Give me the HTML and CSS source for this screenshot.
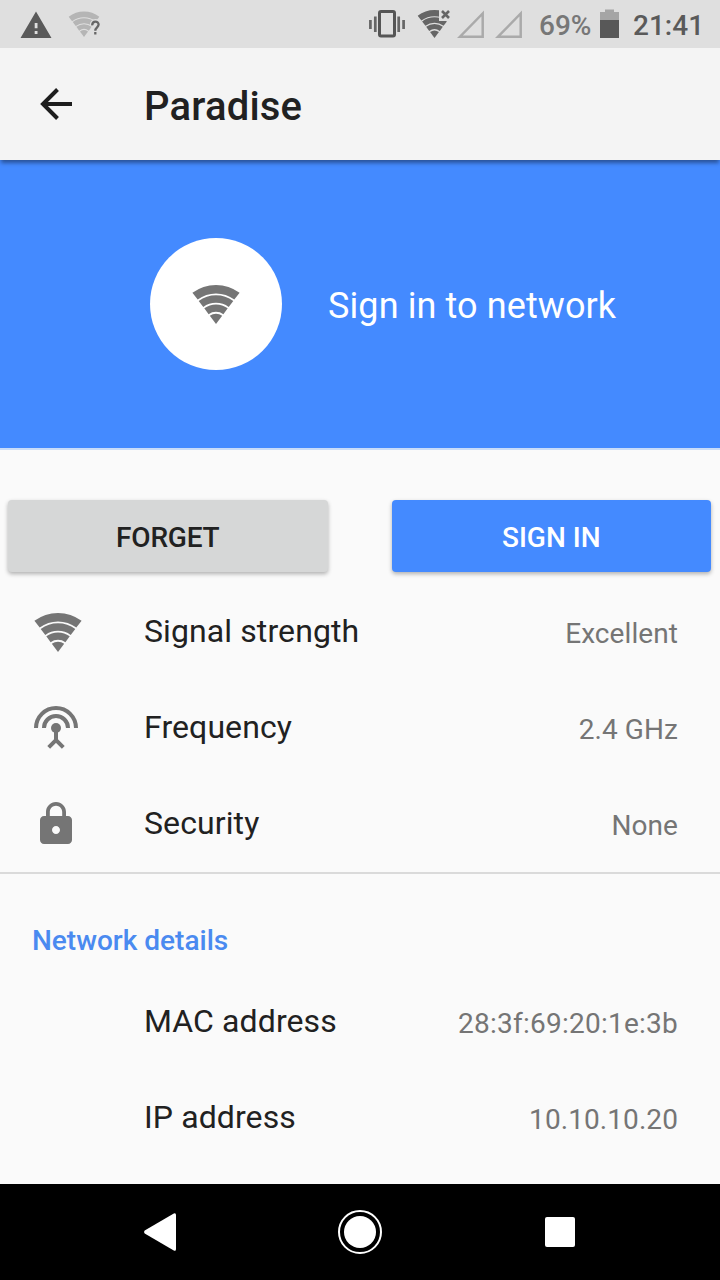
FILE: index.html
```html
<!DOCTYPE html>
<html lang="en">
<head>
<meta charset="utf-8">
<title>Paradise</title>
<link rel="stylesheet" href="styles.css">
</head>
<body>
<svg class="defs" aria-hidden="true">
  <symbol id="wifi" viewBox="-24 -40 48 40">
    <path d="M-23.6-31.2A39.2 39.2 0 0 1 23.6-31.2L18.3-24.4A30.6 30.6 0 0 0-18.3-24.4Z"/>
    <path d="M-17.3-23.1A28.9 28.9 0 0 1 17.3-23.1L12.7-17A21.3 21.3 0 0 0-12.7-17Z"/>
    <path d="M-11.7-15.7A19.6 19.6 0 0 1 11.7-15.7L7.4-9.8A12.3 12.3 0 0 0-7.4-9.8Z"/>
    <path d="M-6.2-8.3A10.4 10.4 0 0 1 6.2-8.3L0 0Z"/>
  </symbol>
</svg>
<div class="screen">
  <header class="status">
    <svg class="warning" viewBox="20 0 32 48"><path fill="#5a5a5a" fill-rule="evenodd" d="M36 11.5 51.5 38h-31ZM34.7 23v5.200h2.800V23ZM34.700 31v3h2.800v-3Z"/></svg>
    <svg class="wifi-unknown" viewBox="68 0 34 48">
      <g transform="translate(84 37) scale(.65)" fill="#b5b5b5"><use href="#wifi" x="-24" y="-40" width="48" height="40"/></g>
      <path d="M92.200 25.200C92.200 20.400 98.600 20.600 98.600 24.600 98.600 27.400 95.300 27.300 95.300 30.800M95.300 32.300v2.600" fill="none" stroke="#dfdfdf" stroke-width="5"/>
      <path d="M92.200 25.200C92.200 20.400 98.600 20.600 98.600 24.600 98.600 27.400 95.300 27.300 95.300 30.800M95.300 32.100v2.300" fill="none" stroke="#666" stroke-width="2.300"/>
    </svg>
    <div class="status-right">
      <svg class="vibrate" viewBox="368 0 38 48"><rect x="379.500" y="11.500" width="15" height="24.500" rx="1.500" fill="none" stroke="#555" stroke-width="3"/><path d="M370.400 20v9M375.300 16.500v15.500M398.700 16.500v15.500M403.600 20v9" stroke="#666" stroke-width="2.700"/></svg>
      <svg class="wifi-off" viewBox="416 0 36 48">
        <g transform="translate(434.500 38) scale(.715)" fill="#666"><use href="#wifi" x="-24" y="-40" width="48" height="40"/></g>
        <path d="M439 9h13v12h-13Z" fill="#dfdfdf"/>
        <path d="m442 11 7 7M449 11l-7 7" stroke="#666" stroke-width="2.600"/>
      </svg>
      <svg class="signal" viewBox="456 0 30 48"><path d="M482.700 13.500v23.200h-22.700Z" fill="none" stroke="#aaa" stroke-width="2.500"/></svg>
      <svg class="signal second" viewBox="494 0 30 48"><path d="M520.700 13.500v23.200h-22.700Z" fill="none" stroke="#aaa" stroke-width="2.500"/></svg>
      <span class="percent">69%</span>
      <svg class="battery" viewBox="600 0 20 48"><path d="M600 12h5V9.500h9V12h5v8h-19Z" fill="#a5a5a5"/><path d="M600 20h19v18h-19Z" fill="#585858"/></svg>
      <span class="clock">21:41</span>
    </div>
  </header>
  <div class="appbar">
    <svg class="back" viewBox="0 0 36 36"><path d="M34 18H5M19.500 3.500 5 18l14.500 14.500" fill="none" stroke="#1d1d1d" stroke-width="4"/></svg>
    <h1>Paradise</h1>
  </div>
  <section class="hero">
    <div class="avatar"><svg class="wifi"><use href="#wifi"/></svg></div>
    <span class="hero-text">Sign in to network</span>
  </section>
  <div class="actions">
    <button class="btn forget">FORGET</button>
    <button class="btn signin">SIGN IN</button>
  </div>
  <section class="list">
    <div class="row"><svg class="wifi row-wifi"><use href="#wifi"/></svg><span class="label">Signal strength</span><span class="value">Excellent</span></div>
    <div class="row">
      <svg class="icon" viewBox="0 0 48 48"><g fill="none" stroke="#757575" stroke-width="4"><path d="M4 24a20 20 0 0 1 40 0M12 24a12 12 0 0 1 24 0M24 26v12M16.700 43.300 24 36l7.300 7.300"/></g><circle cx="24" cy="24" r="5"/></svg>
      <span class="label">Frequency</span><span class="value">2.4 GHz</span>
    </div>
    <div class="row">
      <svg class="icon" viewBox="0 0 24 24"><path d="M18 8h-1V6c0-2.760-2.240-5-5-5S7 3.240 7 6v2H6c-1.100 0-2 .9-2 2v10c0 1.100.9 2 2 2h12c1.100 0 2-.9 2-2V10c0-1.100-.9-2-2-2zm-6 9c-1.100 0-2-.9-2-2s.9-2 2-2 2 .9 2 2-.9 2-2 2zm3.100-9H8.900V6c0-1.710 1.390-3.100 3.100-3.100s3.100 1.390 3.100 3.100v2z"/></svg>
      <span class="label">Security</span><span class="value">None</span>
    </div>
  </section>
  <section class="details">
    <h2>Network details</h2>
    <div class="row"><span class="label">MAC address</span><span class="value mac">28:3f:69:20:1e:3b</span></div>
    <div class="row"><span class="label">IP address</span><span class="value">10.10.10.20</span></div>
  </section>
  <nav class="navbar">
    <svg viewBox="0 0 48 48"><path d="M8.700 22.600 37.800 5.400Q40 4.500 40 7v34q0 2.500-2.200 1.600L8.700 25.400Q7.300 24 8.700 22.600Z"/></svg>
    <svg viewBox="0 0 48 48"><circle cx="24" cy="24" r="21" fill="none" stroke="#fff" stroke-width="2"/><circle cx="24" cy="24" r="16"/></svg>
    <svg viewBox="0 0 48 48"><rect x="9" y="9" width="30" height="30" rx="2"/></svg>
  </nav>
</div>
</body>
</html>
```
FILE: styles.css
```css
* { box-sizing: border-box; }
body { margin: 0; font-family: Roboto, "Liberation Sans", sans-serif; color: #212121; }
svg { display: block; flex: none; }
.defs { display: none; }
.screen { width: 720px; height: 1280px; display: flex; flex-direction: column; background: #fafafa; overflow: hidden; }

.status { height: 48px; flex: none; display: flex; background: #dfdfdf; padding-left: 20px; }
.status svg { height: 48px; }
.warning { width: 32px; }
.wifi-unknown { width: 34px; margin-left: 16px; }
.status-right { margin-left: auto; display: flex; padding-right: 17px; font-size: 28px; font-weight: 500; line-height: 51px; }
.vibrate { width: 38px; }
.wifi-off { width: 36px; margin-left: 10px; }
.signal { width: 30px; margin-left: 4px; }
.signal.second { margin-left: 8px; }
.percent { width: 61px; margin-left: 15px; color: #777; }
.battery { width: 20px; }
.clock { width: 70px; margin-left: 13px; color: #5a5a5a; white-space: nowrap; }

.appbar { height: 112px; flex: none; display: flex; align-items: center; padding-left: 38px; background: #f4f4f4; box-shadow: 0 4px 4px -1px rgba(0, 0, 0, .4); z-index: 1; }
.back { width: 36px; height: 36px; }
h1 { margin: 6px 0 0 70px; font-size: 40px; line-height: 48px; font-weight: 500; letter-spacing: .2px; }

.hero { height: 290px; flex: none; display: flex; align-items: center; padding-left: 150px; background: #448aff; border-bottom: 2px solid #c9dcf9; }
.avatar { width: 132px; height: 132px; border-radius: 50%; background: #fff; display: flex; align-items: center; justify-content: center; }
.wifi { width: 48px; height: 40px; fill: #757575; }
.hero-text { margin: 4px 0 0 46px; font-size: 36px; color: #fff; letter-spacing: .1px; }

.actions { height: 134px; flex: none; display: flex; gap: 64px; padding: 50px 9px 12px 8px; }
.btn { flex: 1; height: 72px; border: 0; padding: 3px 0 0; border-radius: 4px; font: 500 28px Roboto, "Liberation Sans", sans-serif; box-shadow: 0 2px 4px rgba(0, 0, 0, .3); }
.forget { background: #d6d7d7; color: #212121; letter-spacing: -.2px; }
.signin { background: #448aff; color: #fff; }

.list { flex: none; border-bottom: 2px solid #dadada; }
.row { height: 96px; display: grid; grid-template-columns: 112px 1fr auto; align-items: center; padding: 0 42px 0 32px; }
.icon { width: 48px; height: 48px; fill: #757575; }
.row-wifi { margin-left: 2px; }
.label { grid-column: 2; font-size: 32px; line-height: 40px; margin-top: -2px; letter-spacing: .1px; }
.value { font-size: 28px; line-height: 36px; color: #757575; margin-top: 4px; letter-spacing: .08px; }
.mac { letter-spacing: .25px; }

.details { flex: 1; }
h2 { margin: 0; height: 100px; padding: 50px 0 0 32px; font-size: 28px; line-height: 34px; font-weight: 500; color: #4a8af0; }

.navbar { height: 96px; flex: none; display: flex; justify-content: center; align-items: center; gap: 152px; background: #000; }
.navbar svg { width: 48px; height: 48px; fill: #fff; }
```
